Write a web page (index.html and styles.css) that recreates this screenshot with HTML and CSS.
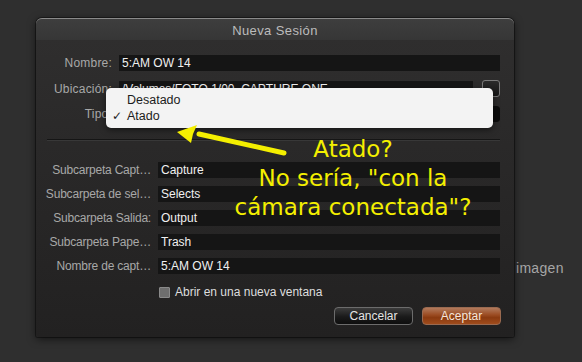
FILE: index.html
```html
<!DOCTYPE html>
<html lang="es">
<head>
  <meta charset="UTF-8">
  <title>Nueva Sesión</title>
  <link rel="stylesheet" href="styles.css">
</head>
<body>
  <span class="bg-text">imagen</span>

  <div class="dialog">
    <div class="titlebar">Nueva Sesión</div>
    <div class="content">
      <div class="form top">
        <label>Nombre:</label>
        <div class="field">5:AM OW 14</div>
        <label>Ubicación:</label>
        <div class="field-row">
          <div class="field path">/Volumes/FOTO 1/00. CAPTURE ONE</div>
          <span class="browse"></span>
        </div>
        <label>Tipo:</label>
        <div class="popup"><span class="popup-btn"></span></div>
      </div>

      <div class="sep"></div>

      <div class="form bottom">
        <label>Subcarpeta Capt…</label>
        <div class="field">Capture</div>
        <label>Subcarpeta de sel…</label>
        <div class="field">Selects</div>
        <label>Subcarpeta Salida:</label>
        <div class="field">Output</div>
        <label>Subcarpeta Pape…</label>
        <div class="field">Trash</div>
        <label>Nombre de capt…</label>
        <div class="field">5:AM OW 14</div>
      </div>

      <div class="check-row">
        <span class="checkbox"></span>
        <span>Abrir en una nueva ventana</span>
      </div>

      <div class="buttons">
        <button class="btn">Cancelar</button>
        <button class="btn primary">Aceptar</button>
      </div>
    </div>

    <!-- popup menu opened over the Tipo field -->
    <div class="menu">
      <div class="menu-item">Desatado</div>
      <div class="menu-item checked">Atado</div>
    </div>
  </div>

  <svg class="arrow" width="110" height="40" viewBox="0 0 110 40">
    <line x1="107" y1="31" x2="22" y2="12" stroke="#f4ef00" stroke-width="5" stroke-linecap="round"/>
    <polygon points="0,10 20,3 16,12 14,21" fill="#f4ef00"/>
  </svg>

  <div class="note">Atado?<br>No sería, "con la<br>cámara conectada"?</div>
</body>
</html>
```

FILE: styles.css
```css
body{
  margin: 0;
  width: 582px;
  height: 362px;
  background-color: #2f2f2f;
  font-family: "Liberation Sans", Arial, sans-serif;
  font-size: 12px;
  overflow: hidden;
  position: relative;
}
.bg-text{
  position: absolute;
  left: 516px;
  top: 260px;
  font-size: 14px;
  color: #a6a6a6;
  letter-spacing: 0.3px;
}
.dialog{
  position: relative;
  margin: 18px 0 0 36px;
  width: 478px;
  height: 319px;
  border-radius: 6px 6px 2px 2px;
  background: linear-gradient(#302f2f, #2a2929 40%, #222121);
  box-shadow: 0 2px 8px rgba(0,0,0,0.6), 0 0 0 1px #1c1c1c;
}
.titlebar{
  height: 22px;
  line-height: 23px;
  text-align: center;
  color: #bcbcbc;
  font-size: 13px;
  letter-spacing: 0.4px;
  border-radius: 6px 6px 0 0;
  border-top: 1px solid #8a8a8a;
  box-sizing: border-box;
  background: linear-gradient(#3e3e3e, #363636);
}
.content{
  padding-top: 15px;
}
.form{
  display: grid;
  column-gap: 7px;
  margin-right: 14px;
  align-items: center;
}
.form.top{
  grid-template-columns: 76px 1fr;
  row-gap: 9px;
}
.form.bottom{
  grid-template-columns: 115px 1fr;
  row-gap: 8px;
}
.form label{
  text-align: right;
  color: #a8a8a8;
  white-space: nowrap;
}
.form.top label{
  letter-spacing: 0.2px;
}
.form.bottom label{
  letter-spacing: -0.2px;
}
.field{
  height: 16px;
  line-height: 16px;
  background-color: #151515;
  color: #f0f0f0;
  padding-left: 3px;
  white-space: nowrap;
  overflow: hidden;
}
.field-row{
  display: flex;
  align-items: center;
  gap: 9px;
}
.field-row .field{
  flex: 1;
}
.browse{
  width: 16px;
  height: 15px;
  border: 1px solid #7a7a7a;
  border-radius: 3px;
  background: linear-gradient(#2a2a2a, #161616);
}
.popup{
  height: 16px;
  border-radius: 4px;
  background-color: #1a1a1a;
  display: flex;
  justify-content: flex-end;
}
.popup-btn{
  width: 12px;
  height: 16px;
  border-radius: 0 4px 4px 0;
  background-color: #0c0c0c;
}
.sep{
  height: 1px;
  background-color: #151515;
  border-bottom: 1px solid #383838;
  margin: 17px 14px 21px 11px;
}
.check-row{
  display: flex;
  align-items: center;
  gap: 5px;
  margin: 11px 0 0 123px;
  height: 14px;
  color: #dedede;
}
.checkbox{
  width: 9px;
  height: 9px;
  background-color: #6e6e6e;
  border: 1px solid #8a8a8a;
  border-radius: 1px;
}
.buttons{
  display: flex;
  justify-content: flex-end;
  gap: 9px;
  margin: 8px 13px 0 0;
}
.btn{
  width: 79px;
  height: 18px;
  padding: 0;
  border-radius: 4px;
  font-family: "Liberation Sans", Arial, sans-serif;
  font-size: 12px;
  color: #e4e4e4;
  border: 1px solid #6c6c6c;
  background: linear-gradient(#3c3c3c, #1a1a1a 55%, #0e0e0e);
}
.btn.primary{
  color: #f4e6dc;
  border-color: #9a6a50;
  background: linear-gradient(#b27a5c, #9a4a20 45%, #8a3a10 60%, #a04c1c);
}
.menu{
  position: absolute;
  left: 70px;
  top: 70px;
  width: 387px;
  height: 40px;
  padding-top: 4px;
  box-sizing: border-box;
  border-radius: 5px;
  background-color: #f3f3f3;
  box-shadow: 0 2px 6px rgba(0,0,0,0.5);
}
.menu-item{
  height: 16px;
  line-height: 16px;
  padding-left: 21px;
  font-size: 12.5px;
  color: #1c1c1c;
  position: relative;
}
.menu-item.checked::before{
  content: "\2713";
  position: absolute;
  left: 6px;
  font-family: "DejaVu Sans", sans-serif;
  font-size: 12px;
}
.arrow{
  position: absolute;
  left: 177px;
  top: 122px;
}
.note{
  position: absolute;
  left: 213px;
  top: 135px;
  width: 280px;
  text-align: center;
  font-family: "DejaVu Sans", Verdana, sans-serif;
  font-size: 23px;
  line-height: 29px;
  color: #f4ef00;
}
```
